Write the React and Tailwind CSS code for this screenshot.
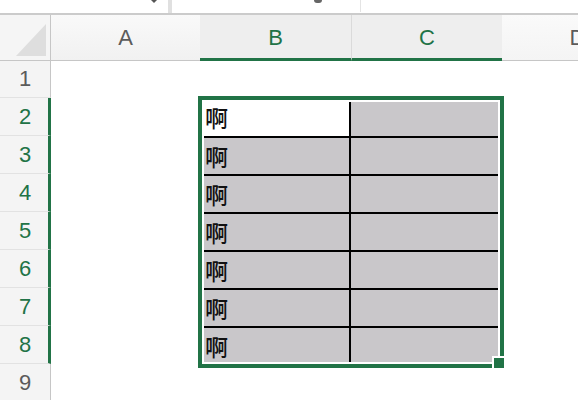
import React from 'react';

const rows = [1, 2, 3, 4, 5, 6, 7, 8, 9];

// B2:C8 is the filled block, the rest of the sheet is blank (gridlines off)
const inBlock = (r) => r >= 2 && r <= 8;

const RowHeader = ({ n }) => {
  const active = inBlock(n);
  return (
    <div
      className={
        'w-[51px] shrink-0 flex items-center justify-center bg-[#f4f4f4] border-b border-[#e2e2e2] ' +
        (active
          ? 'border-r-[3px] border-r-[#217346] text-[#217346] pl-[2px]'
          : 'border-r border-r-[#c6c6c6] text-[#5b5b5b]')
      }
    >
      <span className="text-[22px] leading-none">{n}</span>
    </div>
  );
};

const BlockCell = ({ row, col }) => {
  const white = row === 2 && col === 'B';
  return (
    <div
      className={
        'h-full flex items-center overflow-hidden ' +
        (white ? 'bg-white ' : 'bg-[#c9c7ca] ') +
        (row > 2 ? 'border-t-2 border-black ' : '') +
        (col === 'B' ? 'w-[151px] border-r-2 border-r-black pl-[5px]' : 'w-[151px]')
      }
    >
      {col === 'B' && (
        <span
          className="text-[23px] leading-none font-medium text-[#111]"
          style={{ fontFamily: '"Noto Sans CJK SC", sans-serif' }}
        >
          啊
        </span>
      )}
    </div>
  );
};

export default function App() {
  return (
    <div
      className="relative w-full h-[400px] overflow-hidden bg-white"
      style={{ fontFamily: '"Liberation Sans", Arial, sans-serif' }}
    >
      {/* name box / formula bar, cut off at the top */}
      <div className="h-[15px] flex border-b-[2px] border-[#cbcbcb]">
        <div className="w-[168px] relative">
          <svg className="absolute left-[150px] top-0" width="8" height="4" viewBox="0 0 8 4">
            <path d="M1 0 L4 3 L7 0 Z" fill="#555" />
          </svg>
        </div>
        <div className="w-[4px] bg-[#e0e0e0]" />
        <div className="flex-1 relative">
          <div className="absolute left-[142px] top-0 w-[8px] h-[3px] rounded-b-full bg-[#666]" />
          <div className="absolute left-[188px] top-0 w-px h-[12px] bg-[#e4e4e4]" />
        </div>
      </div>

      {/* column headers */}
      <div className="h-[46px] flex">
        <div className="w-[51px] shrink-0 relative bg-[#f5f5f5] border-r border-[#c6c6c6] border-b border-b-[#c6c6c6]">
          <svg className="absolute left-[16px] top-[9px]" width="30" height="32" viewBox="0 0 30 32">
            <path d="M30 0 L30 32 L0 32 Z" fill="#dedede" />
          </svg>
        </div>
        <div className="w-[149px] shrink-0 flex items-center justify-center bg-gradient-to-b from-[#f9f9f9] to-[#f1f1f1] border-b border-[#c6c6c6] text-[#5b5b5b]">
          <span className="text-[22px] leading-none">A</span>
        </div>
        <div className="w-[151px] shrink-0 flex items-center justify-center bg-[#eeeeee] border-b-[3px] border-[#217346] text-[#217346] pt-[3px]">
          <span className="text-[22px] leading-none">B</span>
        </div>
        <div className="w-[151px] shrink-0 flex items-center justify-center bg-[#eeeeee] border-l border-l-[#dadada] border-b-[3px] border-b-[#217346] text-[#217346] pt-[3px]">
          <span className="text-[22px] leading-none">C</span>
        </div>
        <div className="w-[151px] shrink-0 flex items-center justify-center bg-gradient-to-b from-[#fafafa] to-[#f4f4f4] border-b border-[#c6c6c6] text-[#5b5b5b]">
          <span className="text-[22px] leading-none">D</span>
        </div>
      </div>

      {/* sheet rows */}
      <div className="flex flex-col">
        {rows.map((r) => (
          <div key={r} className={'flex ' + (r === 1 ? 'h-[37px]' : 'h-[38px]')}>
            <RowHeader n={r} />
            <div className="w-[149px] shrink-0" />
            {inBlock(r) ? (
              <>
                <BlockCell row={r} col="B" />
                <BlockCell row={r} col="C" />
              </>
            ) : (
              <div className="w-[302px] shrink-0" />
            )}
          </div>
        ))}
      </div>

      {/* selection outline + fill handle */}
      <div className="absolute left-[198px] top-[96px] w-[306px] h-[272px] border-4 border-[#217346] shadow-[inset_0_0_0_2px_#ffffff] pointer-events-none" />
      <div className="absolute left-[492px] top-[356px] w-[14px] h-[14px] bg-[#217346] border-2 border-white" />
    </div>
  );
}
